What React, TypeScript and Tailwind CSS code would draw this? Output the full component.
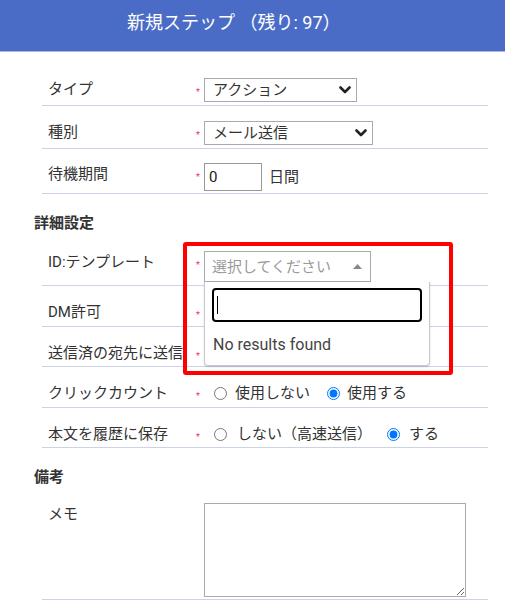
import type { ReactNode } from 'react'

function Req() {
  return (
    <div className="w-[9px] shrink-0 pl-[1px]">
      <span className="mt-[10px] block text-[9px] leading-[9px] text-[#f0334a]">*</span>
    </div>
  )
}

function Row({
  label,
  children,
  pad = 'pt-[15px] pb-[3px]',
  required = true,
}: {
  label: string
  children?: ReactNode
  pad?: string
  required?: boolean
}) {
  return (
    <div className={`flex border-b border-[#cad3e8] pl-[6px] ${pad}`}>
      <div className="w-[147px] shrink-0 text-[15px] leading-[22px] text-[#333]">{label}</div>
      {required ? <Req /> : <div className="w-[9px] shrink-0" />}
      <div className="min-w-0 flex-1">{children}</div>
    </div>
  )
}

function Chevron() {
  return (
    <svg width="12" height="8" viewBox="0 0 12 8" className="shrink-0">
      <path d="M1.5 1.5 L6 6 L10.5 1.5" fill="none" stroke="#222" strokeWidth="2.6" strokeLinecap="round" strokeLinejoin="round" />
    </svg>
  )
}

function FakeSelect({ value, width }: { value: string; width: string }) {
  return (
    <div className={`flex h-[24px] items-center justify-between border border-[#aaa] bg-white pl-[8px] pr-[5px] ${width}`}>
      <span className="text-[15px] leading-[22px] text-[#333]">{value}</span>
      <Chevron />
    </div>
  )
}

function Heading({ children }: { children: ReactNode }) {
  return <div className="mt-[18px] pl-[34px] text-[15px] font-bold leading-[22px] text-[#333]">{children}</div>
}

export default function App() {
  return (
    <div className="relative min-h-[610px] w-[505px] bg-white font-['Roboto','Noto_Sans_CJK_JP',sans-serif]">
      <header className="h-[52px] border-b border-[#a9b9e6] bg-[#4a6cc6] pl-[127px] pt-[11px] text-[18px] leading-[24px] text-white">
        新規ステップ （残り: 97）
      </header>

      <div className="ml-[42px] mt-[11px] w-[446px]">
        <Row label="タイプ">
          <FakeSelect value="アクション" width="w-[153px]" />
        </Row>
        <Row label="種別">
          <FakeSelect value="メール送信" width="w-[169px]" />
        </Row>
        <Row label="待機期間" pad="pt-[14px] pb-[2px]">
          <div className="flex items-center">
            <div className="flex h-[28px] w-[58px] items-center border border-[#999] pl-[4px] text-[15px] text-[#222]">0</div>
            <span className="ml-[7px] text-[15px] leading-[22px] text-[#333]">日間</span>
          </div>
        </Row>
      </div>

      <Heading>詳細設定</Heading>

      <div className="ml-[42px] w-[446px]">
        <Row label="ID:テンプレート" pad="pt-[17px] pb-[3px]">
          <div className="relative w-[167px]">
            <div className="flex h-[31px] items-center justify-between border border-[#aaa] bg-white pl-[7px] pr-[8px]">
              <span className="text-[15px] leading-[22px] text-[#9a9a9a]">選択してください</span>
              <svg width="9" height="5" viewBox="0 0 9 5">
                <path d="M0 5 L4.5 0 L9 5 Z" fill="#888" />
              </svg>
            </div>
            <div className="absolute left-0 top-[31px] z-10 h-[84px] w-[226px] rounded-b-[4px] border border-t-0 border-[#c8c8c8] bg-white px-[7px] pt-[6px] shadow-[0_1px_2px_rgba(0,0,0,0.15)]">
              <div className="flex h-[34px] items-center rounded-[4px] border-2 border-black pl-[3px]">
                <span className="h-[18px] w-px bg-black" />
              </div>
              <div className="mt-[12px] pl-[1px] text-[16px] leading-[22px] text-[#444]">No results found</div>
            </div>
          </div>
        </Row>
        <Row label="DM許可" />
        <Row label="送信済の宛先に送信" pad="pt-[15px] pb-[2px]" />
        <Row label="クリックカウント">
          <div className="flex h-[22px] items-center text-[15px] text-[#333]">
            <input type="radio" name="click" className="ml-[10px] mr-[8px] h-[13px] w-[13px]" />
            <span className="mr-[17px]">使用しない</span>
            <input type="radio" name="click" defaultChecked className="mr-[7px] h-[13px] w-[13px]" />
            <span>使用する</span>
          </div>
        </Row>
        <Row label="本文を履歴に保存" pad="pt-[15px] pb-[2px]">
          <div className="flex h-[22px] items-center text-[15px] text-[#333]">
            <input type="radio" name="save" className="ml-[10px] mr-[10px] h-[13px] w-[13px]" />
            <span className="mr-[15px]">しない（高速送信）</span>
            <input type="radio" name="save" defaultChecked className="mr-[9px] h-[13px] w-[13px]" />
            <span>する</span>
          </div>
        </Row>
      </div>

      <Heading>備考</Heading>

      <div className="ml-[42px] w-[446px]">
        <Row label="メモ" required={false} pad="pt-[15px] pb-[2px]">
          <textarea className="block h-[94px] w-[262px] border border-[#aaa] bg-white" />
        </Row>
      </div>

      <div className="pointer-events-none absolute left-[183px] top-[242px] z-20 h-[133px] w-[270px] rounded-[3px] border-4 border-[#ff0000]" />
    </div>
  )
}
